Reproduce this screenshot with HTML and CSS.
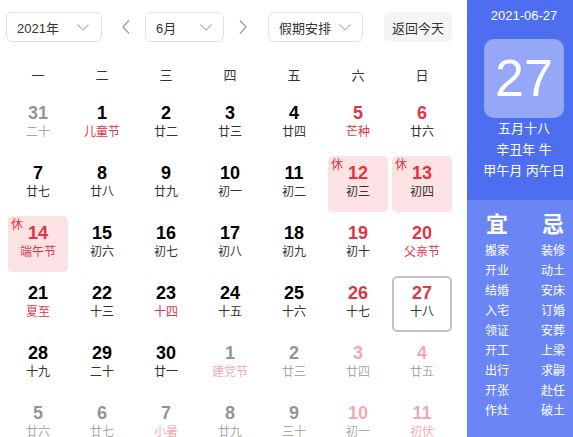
FILE: index.html
```html
<!DOCTYPE html>
<html lang="zh">
<head>
<meta charset="utf-8">
<link rel="stylesheet" href="styles.css">
</head>
<body>
<div class="app">
  <div class="main">
    <div class="toolbar">
      <div class="select sel-year"><span>2021年</span><svg class="chev" width="12" height="7" viewBox="0 0 12 7"><polyline points="0.5,0.5 6,6 11.5,0.5" fill="none" stroke="#b5b5b5" stroke-width="1.1"/></svg></div>
      <div class="arrow arrow-prev"><svg width="8" height="14" viewBox="0 0 8 14"><polyline points="7,0.5 1,7 7,13.5" fill="none" stroke="#999" stroke-width="1.2"/></svg></div>
      <div class="select sel-month"><span>6月</span><svg class="chev" width="12" height="7" viewBox="0 0 12 7"><polyline points="0.5,0.5 6,6 11.5,0.5" fill="none" stroke="#b5b5b5" stroke-width="1.1"/></svg></div>
      <div class="arrow arrow-next"><svg width="8" height="14" viewBox="0 0 8 14"><polyline points="1,0.5 7,7 1,13.5" fill="none" stroke="#999" stroke-width="1.2"/></svg></div>
      <div class="select sel-holiday"><span>假期安排</span><svg class="chev" width="12" height="7" viewBox="0 0 12 7"><polyline points="0.5,0.5 6,6 11.5,0.5" fill="none" stroke="#b5b5b5" stroke-width="1.1"/></svg></div>
      <div class="today-btn">返回今天</div>
    </div>
    <div class="weekdays">
      <div>一</div><div>二</div><div>三</div><div>四</div><div>五</div><div>六</div><div>日</div>
    </div>
    <div class="grid">
      <div class="cell other"><div class="box"><div class="num">31</div><div class="lunar">二十</div></div></div>
      <div class="cell"><div class="box"><div class="num">1</div><div class="lunar red">儿童节</div></div></div>
      <div class="cell"><div class="box"><div class="num">2</div><div class="lunar">廿二</div></div></div>
      <div class="cell"><div class="box"><div class="num">3</div><div class="lunar">廿三</div></div></div>
      <div class="cell"><div class="box"><div class="num">4</div><div class="lunar">廿四</div></div></div>
      <div class="cell"><div class="box"><div class="num red">5</div><div class="lunar red">芒种</div></div></div>
      <div class="cell"><div class="box"><div class="num red">6</div><div class="lunar">廿六</div></div></div>

      <div class="cell"><div class="box"><div class="num">7</div><div class="lunar">廿七</div></div></div>
      <div class="cell"><div class="box"><div class="num">8</div><div class="lunar">廿八</div></div></div>
      <div class="cell"><div class="box"><div class="num">9</div><div class="lunar">廿九</div></div></div>
      <div class="cell"><div class="box"><div class="num">10</div><div class="lunar">初一</div></div></div>
      <div class="cell"><div class="box"><div class="num">11</div><div class="lunar">初二</div></div></div>
      <div class="cell"><div class="box rest"><span class="badge">休</span><div class="num red">12</div><div class="lunar">初三</div></div></div>
      <div class="cell"><div class="box rest"><span class="badge">休</span><div class="num red">13</div><div class="lunar">初四</div></div></div>

      <div class="cell"><div class="box rest"><span class="badge">休</span><div class="num red">14</div><div class="lunar red">端午节</div></div></div>
      <div class="cell"><div class="box"><div class="num">15</div><div class="lunar">初六</div></div></div>
      <div class="cell"><div class="box"><div class="num">16</div><div class="lunar">初七</div></div></div>
      <div class="cell"><div class="box"><div class="num">17</div><div class="lunar">初八</div></div></div>
      <div class="cell"><div class="box"><div class="num">18</div><div class="lunar">初九</div></div></div>
      <div class="cell"><div class="box"><div class="num red">19</div><div class="lunar">初十</div></div></div>
      <div class="cell"><div class="box"><div class="num red">20</div><div class="lunar red">父亲节</div></div></div>

      <div class="cell"><div class="box"><div class="num">21</div><div class="lunar red">夏至</div></div></div>
      <div class="cell"><div class="box"><div class="num">22</div><div class="lunar">十三</div></div></div>
      <div class="cell"><div class="box"><div class="num">23</div><div class="lunar red">十四</div></div></div>
      <div class="cell"><div class="box"><div class="num">24</div><div class="lunar">十五</div></div></div>
      <div class="cell"><div class="box"><div class="num">25</div><div class="lunar">十六</div></div></div>
      <div class="cell"><div class="box"><div class="num red">26</div><div class="lunar">十七</div></div></div>
      <div class="cell"><div class="box today"><div class="num red">27</div><div class="lunar">十八</div></div></div>

      <div class="cell"><div class="box"><div class="num">28</div><div class="lunar">十九</div></div></div>
      <div class="cell"><div class="box"><div class="num">29</div><div class="lunar">二十</div></div></div>
      <div class="cell"><div class="box"><div class="num">30</div><div class="lunar">廿一</div></div></div>
      <div class="cell other"><div class="box"><div class="num">1</div><div class="lunar red">建党节</div></div></div>
      <div class="cell other"><div class="box"><div class="num">2</div><div class="lunar">廿三</div></div></div>
      <div class="cell other"><div class="box"><div class="num red">3</div><div class="lunar">廿四</div></div></div>
      <div class="cell other"><div class="box"><div class="num red">4</div><div class="lunar">廿五</div></div></div>

      <div class="cell other"><div class="box"><div class="num">5</div><div class="lunar">廿六</div></div></div>
      <div class="cell other"><div class="box"><div class="num">6</div><div class="lunar">廿七</div></div></div>
      <div class="cell other"><div class="box"><div class="num">7</div><div class="lunar red">小暑</div></div></div>
      <div class="cell other"><div class="box"><div class="num">8</div><div class="lunar">廿九</div></div></div>
      <div class="cell other"><div class="box"><div class="num">9</div><div class="lunar">三十</div></div></div>
      <div class="cell other"><div class="box"><div class="num red">10</div><div class="lunar">初一</div></div></div>
      <div class="cell other"><div class="box"><div class="num red">11</div><div class="lunar red">初伏</div></div></div>
    </div>
  </div>
  <div class="panel">
    <div class="panel-top">
      <div class="p-date">2021-06-27</div>
      <div class="p-day">27</div>
      <div class="p-line">五月十八</div>
      <div class="p-line">辛丑年 牛</div>
      <div class="p-line">甲午月 丙午日</div>
    </div>
    <div class="panel-bottom">
      <div class="yj-col">
        <div class="yj-title">宜</div>
        <div class="yj-item">搬家</div>
        <div class="yj-item">开业</div>
        <div class="yj-item">结婚</div>
        <div class="yj-item">入宅</div>
        <div class="yj-item">领证</div>
        <div class="yj-item">开工</div>
        <div class="yj-item">出行</div>
        <div class="yj-item">开张</div>
        <div class="yj-item">作灶</div>
      </div>
      <div class="yj-col">
        <div class="yj-title">忌</div>
        <div class="yj-item">装修</div>
        <div class="yj-item">动土</div>
        <div class="yj-item">安床</div>
        <div class="yj-item">订婚</div>
        <div class="yj-item">安葬</div>
        <div class="yj-item">上梁</div>
        <div class="yj-item">求嗣</div>
        <div class="yj-item">赴任</div>
        <div class="yj-item">破土</div>
      </div>
    </div>
  </div>
</div>
</body>
</html>
```

FILE: styles.css
```css
html, body {
  margin: 0;
  padding: 0;
  height: 437px;
  overflow: hidden;
  background: #fff;
}
body {
  font-family: "Liberation Sans", "Noto Sans CJK SC", sans-serif;
  color: #333;
}
.app {
  display: flex;
  width: 573px;
  height: 437px;
  overflow: hidden;
}
.main {
  width: 467px;
  flex: none;
  padding-left: 6px;
  box-sizing: border-box;
}
.toolbar {
  display: flex;
  align-items: center;
  height: 30px;
  padding-top: 12px;
  padding-bottom: 12px;
}
.select {
  height: 30px;
  box-sizing: border-box;
  border: 1px solid #e2e2e2;
  border-radius: 6px;
  display: flex;
  align-items: center;
  justify-content: space-between;
  padding: 0 11px 0 10px;
  font-size: 13px;
  color: #333;
}
.sel-year { width: 96px; padding-right: 12px; }
.sel-month { width: 79px; }
.sel-holiday { width: 95px; }
.chev { display: block; }
.arrow {
  width: 20px;
  height: 30px;
  display: flex;
  align-items: center;
  justify-content: center;
}
.arrow-prev { margin: 0 9px 0 14px; }
.arrow-next { margin: 0 15px 0 9px; }
.today-btn {
  margin-left: 21px;
  width: 68px;
  height: 30px;
  border-radius: 6px;
  background: #f5f5f6;
  font-size: 13px;
  color: #333;
  display: flex;
  align-items: center;
  justify-content: center;
}
.weekdays {
  display: grid;
  grid-template-columns: repeat(7, 64px);
  height: 40px;
  align-items: center;
  font-size: 13px;
  color: #333;
}
.weekdays div { text-align: center; }
.grid {
  display: grid;
  grid-template-columns: repeat(7, 64px);
  grid-auto-rows: 60px;
}
.cell {
  padding: 2px;
  box-sizing: border-box;
}
.cell.other { opacity: 0.42; }
.box {
  position: relative;
  height: 56px;
  box-sizing: border-box;
  border-radius: 5px;
  padding-top: 7px;
  text-align: center;
}
.box.rest { background: #fde2e4; }
.box.today {
  border: 2px solid #c4c4c8;
  padding-top: 5px;
}
.num {
  font-size: 18px;
  font-weight: bold;
  line-height: 21px;
  color: #000;
}
.lunar {
  font-size: 12px;
  line-height: 16px;
  color: #333;
}
.red { color: #e03545; }
.badge {
  position: absolute;
  top: 2px;
  left: 3px;
  font-size: 12px;
  line-height: 14px;
  color: #e03545;
}
.panel {
  width: 106px;
  flex: none;
  display: flex;
  flex-direction: column;
  color: #fff;
}
.panel-top {
  height: 200px;
  background: #4e6ef2;
  padding-left: 8px;
  box-sizing: border-box;
  padding-top: 7px;
  text-align: center;
}
.p-date {
  font-size: 13px;
  line-height: 18px;
}
.p-day {
  width: 80px;
  height: 79px;
  margin: 14px auto 0;
  border-radius: 10px;
  background: #94a8f7;
  font-size: 52px;
  line-height: 79px;
  font-family: "Liberation Sans", sans-serif;
}
.p-line {
  font-size: 13px;
  line-height: 21px;
}
.p-line:first-of-type { margin-top: 7px; }
.panel-bottom {
  flex: 1;
  background: #6a86f4;
  display: flex;
  gap: 16px;
  padding-left: 10px;
  padding-top: 12px;
  box-sizing: border-box;
}
.yj-col {
  width: 40px;
  text-align: center;
}
.yj-title {
  font-size: 22px;
  font-weight: bold;
  line-height: 26px;
  margin-bottom: 3px;
}
.yj-item {
  font-size: 12px;
  line-height: 20px;
}
```
